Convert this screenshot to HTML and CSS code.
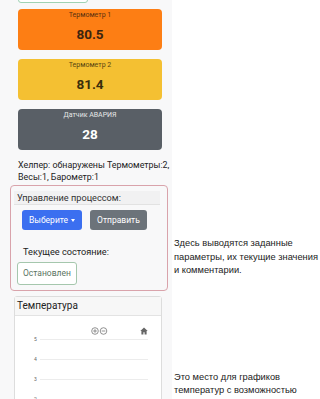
FILE: index.html
```html
<!DOCTYPE html>
<html lang="ru">
<head>
<meta charset="utf-8">
<title>Панель</title>
<link rel="stylesheet" href="styles.css">
</head>
<body>
<div class="page">
  <div class="panel">
    <div class="top-btn"></div>
    <div class="cards">
      <div class="card card-orange">
        <div class="card-label">Термометр 1</div>
        <div class="card-value">80.5</div>
      </div>
      <div class="card card-yellow">
        <div class="card-label">Термометр 2</div>
        <div class="card-value">81.4</div>
      </div>
      <div class="card card-gray">
        <div class="card-label">Датчик АВАРИЯ</div>
        <div class="card-value">28</div>
      </div>
    </div>
    <p class="helper">Хелпер: обнаружены Термометры:2,<br>Весы:1, Барометр:1</p>
    <div class="control">
      <div class="control-head">Управление процессом:</div>
      <div class="btn-row">
        <span class="btn btn-blue">Выберите <span class="caret"></span></span>
        <span class="btn btn-gray">Отправить</span>
      </div>
      <div class="state-label">Текущее состояние:</div>
      <span class="btn-state">Остановлен</span>
    </div>
    <div class="chart-card">
      <div class="chart-head">Температура</div>
      <div class="chart-body">
        <div class="chart-tools">
          <div class="zoom-tools">
            <svg width="17" height="8" viewBox="0 0 17 8"><circle cx="4" cy="4" r="3.3" fill="none" stroke="#777" stroke-width="0.8"/><path d="M2.2 4h3.6M4 2.2v3.6" stroke="#777" stroke-width="0.8"/><circle cx="12.5" cy="4" r="3.3" fill="none" stroke="#777" stroke-width="0.8"/><path d="M10.7 4h3.6" stroke="#777" stroke-width="0.8"/></svg>
          </div>
          <svg class="home" width="8" height="8" viewBox="0 0 8 8"><path d="M4 0.5L0.3 4h1.1v3.5h2V5.3h1.2v2.2h2V4h1.1z" fill="#666"/></svg>
        </div>
        <div class="grid">
          <div class="grid-row"><span class="tick">5</span><span class="line"></span></div>
          <div class="grid-row"><span class="tick">4</span><span class="line"></span></div>
          <div class="grid-row"><span class="tick">3</span><span class="line"></span></div>
          <div class="grid-row"><span class="tick">2</span><span class="line"></span></div>
        </div>
      </div>
    </div>
  </div>
  <div class="notes">
    <p class="note note-first">Здесь выводятся заданные<br>параметры, их текущие значения<br>и комментарии.</p>
    <p class="note note-second">Это место для графиков<br>температур с возможностью</p>
  </div>
</div>
</body>
</html>
```

FILE: styles.css
```css
* { box-sizing: border-box; }
html, body { margin: 0; padding: 0; background: #fff; }
body { width: 320px; height: 399px; overflow: hidden; font-family: Roboto, "Liberation Sans", sans-serif; color: #212529; }

.page { display: flex; align-items: flex-start; }

.panel {
  width: 172px;
  flex: none;
  background: #f8f8f9;
  padding: 0 4px 0 10px;
  min-height: 420px;
  display: flex;
  flex-direction: column;
}

.top-btn {
  margin: -21px 0 0 8px;
  width: 70px;
  height: 24px;
  border: 1px solid #9fd3b4;
  border-radius: 3px;
  background: #fff;
}

.cards {
  display: flex;
  flex-direction: column;
  gap: 9px;
  margin: 6px 6px 0 8px;
}

.card {
  height: 41px;
  border-radius: 4px;
  display: flex;
  flex-direction: column;
  align-items: center;
  padding-top: 2px;
}
.card-orange { background: #fd7e14; color: #3b2410; }
.card-yellow { background: #f4c032; color: #3a2e0c; }
.card-gray { background: #595f66; color: #fff; }
.card-label { font-size: 7px; line-height: 9px; opacity: 0.85; }
.card-value { font-size: 13.5px; line-height: 15px; font-weight: 700; margin-top: 7px; }

.helper {
  margin: 10px -4px 0 8px;
  font-size: 8.9px;
  line-height: 11.5px;
  color: #222;
  white-space: nowrap;
}

.control {
  margin-top: 2px;
  height: 106px;
  border: 1px solid #d9a3ab;
  border-radius: 4px;
  padding: 5px 7px 0 3px;
  display: flex;
  flex-direction: column;
  align-items: flex-start;
}
.control-head {
  align-self: stretch;
  background: #f1f1f2;
  border-bottom: 1px solid #e2e2e2;
  font-size: 9.2px;
  line-height: 13px;
  padding-left: 3px;
  color: #333;
}
.btn-row { display: flex; gap: 8px; margin: 5px 0 0 8px; }
.btn {
  height: 20px;
  border-radius: 3px;
  color: #fff;
  font-size: 8.5px;
  line-height: 20px;
  padding: 0 7px;
  display: inline-flex;
  align-items: center;
  gap: 3px;
}
.btn-blue { background: #3b6ff0; }
.btn-gray { background: #6c737a; }
.caret {
  width: 0; height: 0;
  border-left: 2.5px solid transparent;
  border-right: 2.5px solid transparent;
  border-top: 3px solid #fff;
}
.state-label { margin: 16px 0 0 9px; font-size: 9.2px; line-height: 12px; color: #222; }
.btn-state {
  margin: 4px 0 0 3px;
  height: 23px;
  padding: 0 5px;
  border: 1px solid #a5c7ad;
  border-radius: 3px;
  background: #fff;
  font-size: 8.5px;
  line-height: 21px;
  color: #5b7463;
}

.chart-card {
  margin: 5px 6px 0 4px;
  border: 1px solid #ddd;
  border-radius: 3px;
  background: #fff;
  height: 140px;
}
.chart-head {
  background: #f7f7f7;
  border-bottom: 1px solid #e3e3e3;
  font-size: 10px;
  line-height: 18px;
  padding-left: 2px;
  color: #222;
}
.chart-body { padding: 10px 13px 0 19px; }
.chart-tools { display: flex; align-items: center; height: 10px; padding-left: 57px; }
.zoom-tools { display: flex; }
.home { margin-left: auto; }
.grid { margin-top: -7px; }
.grid-row { display: flex; align-items: center; height: 20px; }
.tick { width: 6px; font-size: 5px; line-height: 6px; color: #666; }
.line { flex: 1; height: 1px; background: #ececec; }

.notes { flex: 1; padding: 237px 0 0 2px; }
.note {
  margin: 0;
  font-family: "Liberation Sans", Arial, sans-serif;
  font-size: 9.3px;
  line-height: 13.5px;
  color: #222;
  white-space: nowrap;
}
.note-second { margin-top: 93px; }
```
